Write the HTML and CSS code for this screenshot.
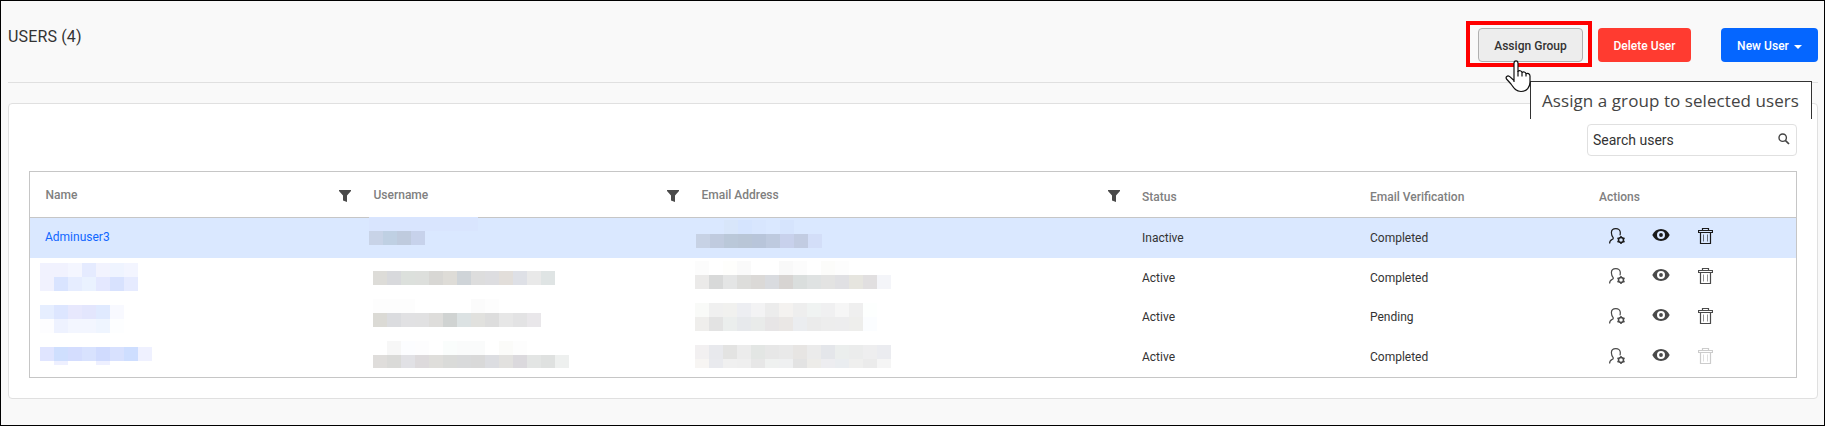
FILE: index.html
```html
<!DOCTYPE html>
<html lang="en">
<head>
<meta charset="utf-8">
<title>Users</title>
<link rel="stylesheet" href="styles.css">
</head>
<body>
<svg class="defs" width="0" height="0" aria-hidden="true">
  <symbol id="filter" viewBox="0 0 12 12"><path d="M0 0h12v1L8 5.500V12L4 10.500V5.500L0 1z" fill="currentColor"/></symbol>
  <symbol id="manage" viewBox="0 0 16 16"><g fill="none" stroke="currentColor"><path d="M.6 15.500c0-2.300.7-3.300 2.200-3.900 1.200-.5 1.800-.8 1.500-1.800C2.300 7.600 2.400 5.900 2.400 4.600 2.400 2 4.200.6 6.800.6s4.500 1.500 4.500 4c0 1 0 1.700-.3 2.700" stroke-width="1.200"/><circle cx="12" cy="12" r="2.500" stroke-width="1.500"/><path d="M12 8v1.500M12 14.500V16M8.500 10l1.300.8M14.200 13.200l1.300.8M8.500 14l1.300-.8M14.200 10.800l1.300-.8" stroke-width="1.500"/></g></symbol>
  <symbol id="eye" viewBox="0 0 18 12"><path fill="currentColor" fill-rule="evenodd" d="M9 0c3.900 0 6.900 2.300 8.700 6-1.800 3.700-4.800 6-8.700 6S2.100 9.700.3 6C2.100 2.300 5.100 0 9 0zm0 2a4 4 0 1 0 0 8 4 4 0 0 0 0-8zm0 2.100a1.900 1.900 0 1 1 0 3.800 1.900 1.900 0 0 1 0-3.800z"/></symbol>
  <symbol id="trash" viewBox="0 0 15 16"><g fill="none" stroke="currentColor"><path d="M4.500 2.500v-2h6v2M.5 2.500h14v2H.5zM2.500 4.500v11h10v-11" stroke-width="1.200"/><path d="M5.500 6.500v7M9.500 6.500v7" opacity=".6"/></g></symbol>
</svg>
<div class="page">
  <header class="topbar">
    <h1>USERS (4)</h1>
    <div class="highlight"><button class="btn btn-assign">Assign Group</button></div>
    <button class="btn btn-delete">Delete User</button>
    <button class="btn btn-new">New User<span class="caret"></span></button>
  </header>
  <section class="card">
    <div class="search"><span>Search users</span><svg width="12" height="12" viewBox="0 0 12 12" fill="none" stroke="#444"><circle cx="4.700" cy="4.700" r="3.700" stroke-width="1.400"/><path d="M7.300 7.300l3.700 3.700" stroke-width="1.700"/></svg></div>
    <div class="table">
      <div class="row head">
        <div>Name<svg class="filter"><use href="#filter"/></svg></div>
        <div>Username<svg class="filter"><use href="#filter"/></svg></div>
        <div>Email Address<svg class="filter"><use href="#filter"/></svg></div>
        <div class="low">Status</div>
        <div class="low">Email Verification</div>
        <div class="low">Actions</div>
      </div>
      <div class="row selected">
        <div class="name"><a>Adminuser3</a></div>
        <div class="user shift-left"><div class="mosaic above"><p><b></b></p><p><i style="background:#c8d3e7"></i><i style="background:#bfd0e3"></i><i style="background:#bfcbde"></i><i style="background:#c7d2eb"></i></p></div></div>
        <div class="mail shift-right"><div class="mosaic drop-2"><p><i></i><i></i><i style="background:#d8e6fa"></i><i style="background:#d5e4fe"></i><i style="background:#d8e6fe"></i><i></i><i style="background:#d6e4fd"></i></p><p><i style="background:#c7d2e5"></i><i style="background:#c0cbdf"></i><i style="background:#bac8d9"></i><i style="background:#b9c6d7"></i><i style="background:#b8c5da"></i><i style="background:#becadf"></i><i style="background:#c8d1ec"></i><i style="background:#c2cce2"></i><i style="background:#d3def8"></i></p></div></div>
        <div class="text">Inactive</div><div class="text">Completed</div>
        <div class="actions"><svg class="manage"><use href="#manage"/></svg><svg class="eye"><use href="#eye"/></svg><svg class="trash"><use href="#trash"/></svg></div>
      </div>
      <div class="row">
        <div class="name"><div class="mosaic drop-5"><p><i style="background:#f1f2fe"></i><i style="background:#f1f2fe"></i><i style="background:#f4f6ff"></i><i style="background:#e5ebff"></i><i style="background:#f2f3fe"></i><i style="background:#eff4ff"></i><i style="background:#f3f5ff"></i></p><p><i style="background:#f1f2fe"></i><i style="background:#d9e4ff"></i><i style="background:#e6edff"></i><i style="background:#eaf2ff"></i><i style="background:#e4e8ff"></i><i style="background:#d8e2fe"></i><i style="background:#e6ebff"></i></p></div></div>
        <div class="user"><div class="mosaic drop-13"><p><i style="background:#dddcd8"></i><i style="background:#d8d9dc"></i><i style="background:#dce0dc"></i><i style="background:#dddfdc"></i><i style="background:#d8d7d4"></i><i style="background:#dedcd7"></i><i style="background:#cfd4d8"></i><i style="background:#dddddd"></i><i style="background:#dddde0"></i><i style="background:#e2deda"></i><i style="background:#dee0e6"></i><i style="background:#e9e9e9"></i><i style="background:#dfe4e4"></i></p></div></div>
        <div class="mail"><div class="mosaic drop-3"><p><i style="background:#fcfcfc"></i><i></i><i style="background:#fefefc"></i><i style="background:#fafafa"></i><i></i><i></i><i style="background:#f9f9f9"></i><i style="background:#fcfcfc"></i><i></i><i style="background:#fcfcfa"></i><i style="background:#fdfdfd"></i></p><p><i style="background:#ebeae9"></i><i style="background:#d8d9d9"></i><i style="background:#e4e5e5"></i><i style="background:#dddddb"></i><i style="background:#dbd9d7"></i><i style="background:#d9dbdf"></i><i style="background:#d7d4d2"></i><i style="background:#dadedd"></i><i style="background:#dfe2e2"></i><i style="background:#e3e3e2"></i><i style="background:#e0e0e3"></i><i style="background:#e6e5df"></i><i style="background:#e1dfe0"></i><i style="background:#f4f5f9"></i></p></div></div>
        <div class="text">Active</div><div class="text">Completed</div>
        <div class="actions"><svg class="manage"><use href="#manage"/></svg><svg class="eye"><use href="#eye"/></svg><svg class="trash"><use href="#trash"/></svg></div>
      </div>
      <div class="row raised">
        <div class="name"><div class="mosaic drop-7"><p><i style="background:#e6eeff"></i><i style="background:#dde6ff"></i><i style="background:#e7e8fd"></i><i style="background:#e3e6fd"></i><i style="background:#e0eaff"></i><i style="background:#f8f9ff"></i></p><p><i style="background:#fdfdff"></i><i style="background:#eef2ff"></i><i style="background:#f3f6ff"></i><i style="background:#f3f6ff"></i><i style="background:#eff5ff"></i><i style="background:#fdfeff"></i></p></div></div>
        <div class="user"><div class="mosaic drop-1"><p><i style="background:#fdfdfd"></i><i style="background:#fdfdfd"></i><i style="background:#fdfdfd"></i><i></i><i></i><i></i><i></i><i style="background:#fbfbfb"></i><i style="background:#fdfdfd"></i></p><p><i style="background:#dbdad5"></i><i style="background:#dbdcdf"></i><i style="background:#e1e1e3"></i><i style="background:#e1e1e2"></i><i style="background:#dedddb"></i><i style="background:#d0d3d2"></i><i style="background:#dce2e3"></i><i style="background:#e1e1de"></i><i style="background:#dddddd"></i><i style="background:#e7e7e7"></i><i style="background:#e3e3e4"></i><i style="background:#e9e7ea"></i></p></div></div>
        <div class="mail"><div class="mosaic drop-5"><p><i style="background:#f9faf8"></i><i style="background:#f0f0f0"></i><i style="background:#f1f1ef"></i><i style="background:#edeef2"></i><i style="background:#f3f3f4"></i><i style="background:#ececec"></i><i style="background:#f4f2f0"></i><i style="background:#eeeeee"></i><i style="background:#f0f3f2"></i><i style="background:#f0f0f1"></i><i style="background:#f6f6f6"></i><i style="background:#efefef"></i><i style="background:#fdfffe"></i></p><p><i style="background:#efeeec"></i><i style="background:#e3e3e3"></i><i style="background:#ebeeed"></i><i style="background:#e7e9ec"></i><i style="background:#e9ebea"></i><i style="background:#e7e5e6"></i><i style="background:#eae7e5"></i><i style="background:#ebedf0"></i><i style="background:#ebebeb"></i><i style="background:#ededed"></i><i style="background:#ededee"></i><i style="background:#eeeeec"></i><i style="background:#fbfdff"></i></p></div></div>
        <div class="text">Active</div><div class="text">Pending</div>
        <div class="actions"><svg class="manage"><use href="#manage"/></svg><svg class="eye"><use href="#eye"/></svg><svg class="trash"><use href="#trash"/></svg></div>
      </div>
      <div class="row raised last">
        <div class="name"><div class="mosaic drop-9"><p><i style="background:#e0e5ff"></i><i style="background:#cfdffe"></i><i style="background:#d4ddfe"></i><i style="background:#d8e2fe"></i><i style="background:#d0dbfe"></i><i style="background:#d8e1fe"></i><i style="background:#cedeff"></i><i style="background:#eff1ff"></i></p><p class="thin"><i></i><i style="background:#eef0ff"></i><i></i><i></i><i style="background:#eef0ff"></i></p></div></div>
        <div class="user"><div class="mosaic drop-3"><p><i></i><i style="background:#f7f7f7"></i><i style="background:#fcfdff"></i><i style="background:#fdfdfe"></i><i></i><i style="background:#fafdfc"></i><i style="background:#fafbfb"></i><i style="background:#fafbfb"></i><i></i><i style="background:#fbfbf9"></i><i style="background:#fdfdfd"></i></p><p class="short"><i style="background:#dfdddb"></i><i style="background:#dadad8"></i><i style="background:#e1e1e5"></i><i style="background:#dddadc"></i><i style="background:#dfdedb"></i><i style="background:#dadbd9"></i><i style="background:#d9dadb"></i><i style="background:#d9d9d9"></i><i style="background:#dcdde1"></i><i style="background:#e2e1df"></i><i style="background:#dbd9dd"></i><i style="background:#e3e5e4"></i><i style="background:#dfe1e0"></i><i style="background:#eef0ef"></i></p></div></div>
        <div class="mail"><div class="mosaic drop-7"><p><i style="background:#f2f0f1"></i><i style="background:#e8e9ed"></i><i style="background:#e3e3e2"></i><i style="background:#ececec"></i><i style="background:#e3e6e4"></i><i style="background:#e7e7e7"></i><i style="background:#e9e9e9"></i><i style="background:#e7e5e3"></i><i style="background:#ebebeb"></i><i style="background:#e4e6ea"></i><i style="background:#ebeeed"></i><i style="background:#ebecec"></i><i style="background:#eeeeef"></i><i style="background:#ebecf0"></i></p><p class="half"><i style="background:#f7f5f3"></i><i style="background:#e9eaee"></i><i style="background:#f0f0f0"></i><i style="background:#efefef"></i><i style="background:#e7e7e7"></i><i style="background:#eff1f0"></i><i style="background:#eff0f1"></i><i style="background:#e3e3e3"></i><i style="background:#edece9"></i><i style="background:#ededf0"></i><i style="background:#eaedf0"></i><i style="background:#efefee"></i><i style="background:#ebebeb"></i><i style="background:#f5f5f5"></i></p></div></div>
        <div class="text">Active</div><div class="text">Completed</div>
        <div class="actions"><svg class="manage"><use href="#manage"/></svg><svg class="eye"><use href="#eye"/></svg><svg class="trash disabled"><use href="#trash"/></svg></div>
      </div>
    </div>
  </section>
  <div class="tooltip">Assign a group to selected users</div>
  <svg class="pointer" viewBox="0 0 27 33"><path d="M9 22V3.500c0-3.400 4-3.400 4 0v8c1-1.300 3.600-1 4 1 1.200-1.200 3.500-.6 4 1.200 1.500-.9 4 0 4 2.300v6c0 5-3 9.500-9 9.500-5.500 0-7.500-4-10-7.500L1.500 19c-1.300-2.200 1-3.800 3-2.600L9 20.500" fill="#fff" stroke="#111" stroke-width="1.200" stroke-linejoin="round"/><path d="M13 11v5.500M17 12.500v4M21 13.500v3" stroke="#111" stroke-width="1.200"/></svg>
</div>
</body>
</html>
```
FILE: styles.css
```css
* { box-sizing: border-box; }
body { margin: 0; font: 12px/16px Roboto, sans-serif; color: #333; }
.defs { position: absolute; }
.page { position: relative; height: 426px; padding: 0 6px 0 7px; border: 1px solid #000; background: #f9f9f9; overflow: hidden; }

.topbar { display: flex; align-items: flex-start; height: 82px; padding-top: 20px; border-bottom: 1px solid #e0e0e0; }
h1 { flex: 1; margin: 6px 0 0; font-size: 16px; line-height: 20px; font-weight: 400; letter-spacing: 0.15px; }
.highlight { width: 126px; height: 46px; padding: 3px 5px 0 8px; border: 4px solid #f00; margin-right: 6px; }
.btn { display: flex; align-items: center; justify-content: center; height: 34px; padding: 2px 0 0; border: 0; border-radius: 4px; font: 500 12px/16px Roboto, sans-serif; color: #fff; letter-spacing: 0.03px; }
.btn-assign { width: 105px; border: 1px solid #b0b0b0; background: #ededed; color: #333; }
.btn-delete { width: 93px; margin-top: 7px; background: #ff3b30; }
.btn-new { width: 97px; margin: 7px 0 0 30px; background: #0566ff; }
.caret { margin: 2px 0 0 5px; border: 4px solid transparent; border-top-color: #fff; border-bottom: 0; }

.card { display: flex; flex-direction: column; height: 296px; margin-top: 20px; padding: 20px; border: 1px solid #e0e0e0; border-radius: 4px; background: #fff; }
.search { display: flex; align-items: center; justify-content: space-between; align-self: flex-end; width: 210px; height: 32px; padding: 0 6px 0 5px; border: 1px solid #e0e0e0; border-radius: 4px; font-size: 14px; }
.search svg { margin-bottom: 2px; }
.table { margin-top: 15px; height: 207px; border: 1px solid #c6c6c6; }
.row { display: grid; grid-template-columns: 328px 328px 441px 228px 229px 1fr; height: 40px; }
.row.head { height: 46px; border-bottom: 1px solid #c6c6c6; color: #808080; font-weight: 500; }
.row.last { height: 39px; }
.head > div { display: flex; justify-content: space-between; padding: 15px 7px 0 15.500px; }
.head > .low { padding: 17px 0 0 15px; }
.filter { width: 12px; height: 12px; margin-top: 3px; color: #4a4a4a; }
.selected { background: #dae8ff; }
.name { padding-left: 10px; }
.name a { display: block; padding: 11px 0 0 5px; color: #0f66ff; }
.user { padding-left: 15px; }
.user.shift-left { padding-left: 11px; }
.mail { padding-left: 9px; }
.mail.shift-right { padding-left: 10px; }
.text { padding: 12px 0 0 15px; }
.raised .text { padding-top: 11px; }

.mosaic p { display: flex; height: 14px; margin: 0; }
.mosaic i { width: 14px; }
.mosaic b { width: 109px; background: #d9e5fe; }
.mosaic .thin { height: 4px; }
.mosaic .short { height: 13px; }
.mosaic .half { height: 9px; }
.above { margin-top: -1px; }
.drop-1 { padding-top: 1px; }
.drop-2 { padding-top: 2px; }
.drop-3 { padding-top: 3px; }
.drop-5 { padding-top: 5px; }
.drop-7 { padding-top: 7px; }
.drop-9 { padding-top: 9px; }
.drop-13 { padding-top: 13px; }

.actions { display: flex; align-items: flex-start; padding: 10px 0 0 25px; color: #4a4a4a; }
.selected .actions { color: #1a1a1a; }
.manage { width: 16px; height: 16px; }
.eye { width: 18px; height: 12px; margin: 1px 0 0 27px; }
.trash { width: 15px; height: 16px; margin-left: 28px; }
.trash.disabled { color: #ccc; }

.tooltip { position: absolute; left: 1529px; top: 80px; width: 282px; height: 38px; padding-left: 11px; border: 1px solid #333; border-bottom: 0; background: #fff; color: #444; font: 17px/38px "Open Sans", sans-serif; letter-spacing: 0.07px; white-space: nowrap; }
.pointer { position: absolute; left: 1504px; top: 59px; width: 27px; height: 33px; }
```
